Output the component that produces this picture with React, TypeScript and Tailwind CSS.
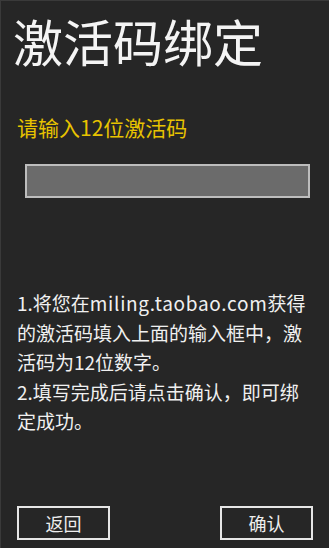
const font = { fontFamily: '"Noto Sans CJK SC", "Noto Sans", sans-serif' };

export default function App() {
  return (
    <div
      className="w-[329px] h-[548px] bg-[#262626] border-t border-l border-[#3a3a3a] flex flex-col overflow-hidden"
      style={font}
    >
      <h1 className="mt-[14px] ml-[12px] text-[50px] leading-[50px] text-[#f4f4f4] font-normal">
        激活码绑定
      </h1>
      <p className="mt-[52px] ml-[16px] text-[21px] leading-[21px] text-[#e8c300]">
        请输入12位激活码
      </p>
      <div className="mt-[26px] ml-[24px] w-[285px] h-[34px] border-2 border-[#bdbdbd] bg-[#6b6b6b]" />
      <div className="mt-[90px] ml-[16px] text-[19px] leading-[29.5px] text-[#f0f0f0]">
        <div className="whitespace-nowrap">
          1.将您在<span className="tracking-[0.7px]">miling.taobao.com</span>获得
        </div>
        <div className="whitespace-nowrap">的激活码填入上面的输入框中，激</div>
        <div className="whitespace-nowrap">活码为12位数字。</div>
        <div className="whitespace-nowrap">2.填写完成后请点击确认，即可绑</div>
        <div className="whitespace-nowrap">定成功。</div>
      </div>
      <div className="mt-auto mb-[8px] ml-[16px] mr-[16px] flex justify-between">
        <button className="w-[93px] h-[34px] border-2 border-[#e6e6e6] text-[18px] text-[#eeeeee] flex items-center justify-center">
          返回
        </button>
        <button className="w-[93px] h-[34px] border-2 border-[#e6e6e6] text-[18px] text-[#eeeeee] flex items-center justify-center">
          确认
        </button>
      </div>
    </div>
  );
}
